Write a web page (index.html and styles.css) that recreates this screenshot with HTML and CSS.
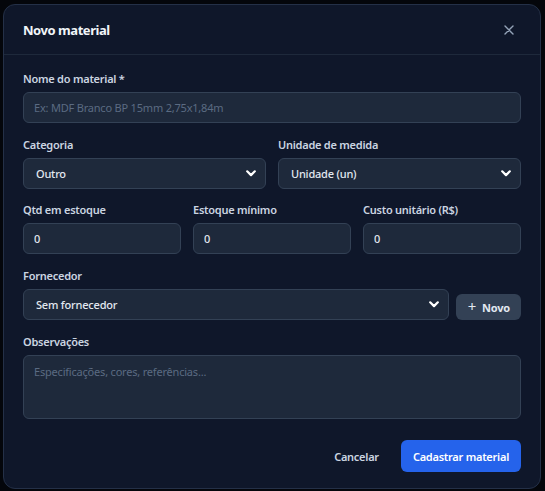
FILE: index.html
```html
<!DOCTYPE html>
<html lang="pt-br">
  <head>
    <meta charset="UTF-8" />
    <title>Novo material</title>
    <link rel="stylesheet" href="styles.css">
  </head>

  <body>
    <div class="overlay">
      <div class="modal">
        <div class="modal-header">
          <h2>Novo material</h2>
          <button class="close" aria-label="Fechar">
            <svg width="10" height="10" viewBox="0 0 10 10">
              <path d="M1 1L9 9M9 1L1 9" stroke="#94a3b8" stroke-width="1.4" stroke-linecap="round" />
            </svg>
          </button>
        </div>

        <form class="modal-body">
          <div class="field">
            <label>Nome do material *</label>
            <input type="text" placeholder="Ex: MDF Branco BP 15mm 2,75x1,84m" />
          </div>

          <div class="row cols-2">
            <div class="field">
              <label>Categoria</label>
              <select>
                <option>Outro</option>
              </select>
            </div>
            <div class="field">
              <label>Unidade de medida</label>
              <select>
                <option>Unidade (un)</option>
              </select>
            </div>
          </div>

          <div class="row cols-3">
            <div class="field">
              <label>Qtd em estoque</label>
              <input type="text" value="0" />
            </div>
            <div class="field">
              <label>Estoque mínimo</label>
              <input type="text" value="0" />
            </div>
            <div class="field">
              <label>Custo unitário (R$)</label>
              <input type="text" value="0" />
            </div>
          </div>

          <div class="field">
            <label>Fornecedor</label>
            <div class="supplier">
              <select>
                <option>Sem fornecedor</option>
              </select>
              <button type="button" class="btn-new">
                <span class="plus">+</span> Novo
              </button>
            </div>
          </div>

          <div class="field">
            <label>Observações</label>
            <textarea placeholder="Especificações, cores, referências..."></textarea>
          </div>
        </form>

        <div class="modal-footer">
          <button type="button" class="btn-cancel">Cancelar</button>
          <button type="button" class="btn-primary">Cadastrar material</button>
        </div>
      </div>
    </div>
  </body>
</html>
```

FILE: styles.css
```css
* {
  margin: 0;
  padding: 0;
  box-sizing: border-box;
}

body {
  background-color: #04060b;
  font-family: "Noto Sans", "Open Sans", sans-serif;
  color: #e2e8f0;
}

.overlay {
  padding: 4px 4px 3px 3px;
}

.modal {
  width: 538px;
  height: 485px;
  background-color: #0f172a;
  border: 1px solid #243047;
  border-radius: 12px;
  display: flex;
  flex-direction: column;
}

.modal-header {
  height: 50px;
  padding: 0 19px;
  border-bottom: 1px solid #1e293b;
  display: flex;
  align-items: center;
  justify-content: space-between;
}

.modal-header h2 {
  font-size: 13px;
  font-weight: 700;
  color: #f1f5f9;
  letter-spacing: -0.45px;
}

.close {
  background: none;
  border: none;
  width: 20px;
  height: 20px;
  display: flex;
  align-items: center;
  justify-content: center;
  margin-right: 2px;
  cursor: pointer;
}

.modal-body {
  padding: 15px 19px 0;
  display: flex;
  flex-direction: column;
  gap: 12.7px;
}

.row {
  display: grid;
  gap: 12px;
}

.cols-2 {
  grid-template-columns: 1fr 1fr;
}

.cols-3 {
  grid-template-columns: 1fr 1fr 1fr;
}

.field {
  display: flex;
  flex-direction: column;
}

.field label {
  font-size: 11px;
  font-weight: 600;
  line-height: 18px;
  margin-bottom: 4px;
  color: #cbd5e1;
  letter-spacing: -0.25px;
}

input,
select,
textarea {
  font-family: "Noto Sans", "Open Sans", sans-serif;
  font-size: 11px;
  color: #e2e8f0;
  background-color: #1e293b;
  border: 1px solid #334155;
  border-radius: 6px;
  height: 31px;
  width: 100%;
  outline: none;
  letter-spacing: -0.2px;
}

input {
  padding: 0 10px;
  font-weight: 500;
}

input::placeholder,
textarea::placeholder {
  color: #5b6b82;
  font-weight: 400;
}

select {
  appearance: none;
  padding: 0 28px 0 12px;
  font-weight: 500;
  background-image: url("data:image/svg+xml;utf8,<svg xmlns='http://www.w3.org/2000/svg' width='10' height='7' viewBox='0 0 10 7'><path d='M1.2 1.3L5 5.1L8.8 1.3' fill='none' stroke='white' stroke-width='2.2' stroke-linecap='round' stroke-linejoin='round'/></svg>");
  background-repeat: no-repeat;
  background-position: right 9px center;
}

textarea {
  height: 64px;
  padding: 8px 10px;
  resize: none;
}

.supplier {
  display: flex;
  align-items: flex-end;
  gap: 7px;
}

.supplier select {
  flex: 1;
}

.btn-new {
  height: 26px;
  padding: 0 11px 0 12px;
  background-color: #334155;
  border: none;
  border-radius: 6px;
  color: #e2e8f0;
  font-family: "Noto Sans", "Open Sans", sans-serif;
  font-size: 11px;
  font-weight: 700;
  letter-spacing: -0.2px;
  display: flex;
  align-items: center;
  gap: 6px;
  cursor: pointer;
}

.btn-new .plus {
  font-weight: 400;
  font-size: 15px;
  line-height: 1;
  margin-top: -2px;
}

.modal-footer {
  margin-top: auto;
  padding: 0 19px 16px;
  display: flex;
  justify-content: flex-end;
  gap: 8px;
}

.btn-cancel,
.btn-primary {
  height: 32px;
  border: none;
  border-radius: 6px;
  font-family: "Noto Sans", "Open Sans", sans-serif;
  font-size: 11px;
  font-weight: 600;
  cursor: pointer;
  letter-spacing: -0.25px;
}

.btn-cancel {
  background: none;
  color: #cbd5e1;
  padding: 0 14px;
}

.btn-primary {
  background-color: #2563eb;
  color: #fff;
  padding: 0 12px;
}
```
